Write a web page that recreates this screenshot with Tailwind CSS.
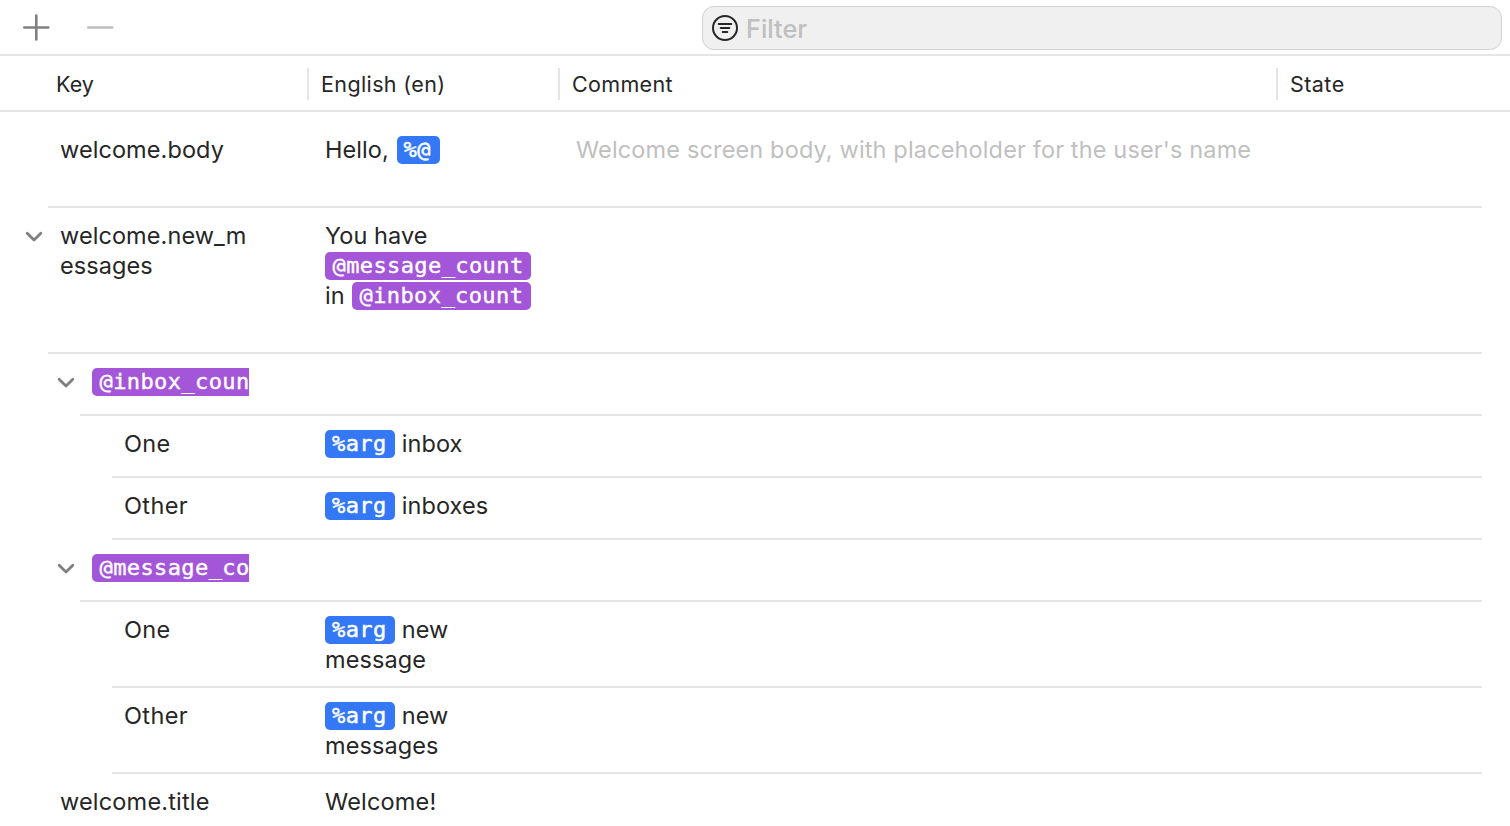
<!DOCTYPE html>
<html lang="en"><head><meta charset="utf-8"><title>String Catalog</title>
<script src="https://cdn.jsdelivr.net/npm/@tailwindcss/browser@4"></script></head>
<body class="w-[1510px] h-[826px] overflow-hidden bg-white font-['Inter',sans-serif] text-[#262626] text-[23.5px] leading-[30px] tracking-[0.08px]">
<header class="flex h-14 items-center border-b-2 border-[#e5e5e5] pl-[22px] pr-2">
  <button aria-label="Add"><svg class="block size-7" viewBox="0 0 28 28" fill="none" stroke="#7f7f7f" stroke-width="2.6" stroke-linecap="round"><path d="M14.3 2.5v24M2.3 14.5h24"/></svg></button>
  <button aria-label="Remove" class="ml-9"><svg class="block size-7" viewBox="0 0 28 28" fill="none" stroke="#bfbfbf" stroke-width="2.6" stroke-linecap="round"><path d="M2.3 14.5h24"/></svg></button>
  <div class="ml-auto mt-0.5 flex h-11 w-[800px] items-center rounded-xl border border-[#d2d2d2] bg-[#f0f0f0] pl-[9px] text-[#bfbfbf]">
    <svg class="block size-7 -mt-px" viewBox="0 0 28 28" fill="none" stroke="#262626" stroke-width="2"><circle cx="13" cy="14" r="12"/><path stroke-linecap="round" d="M6.7 10h12.6M8.7 14h8.6M10.7 18h4.6"/></svg>
    <span class="ml-[6px] pt-0.5 text-[25.3px] font-medium tracking-normal">Filter</span>
  </div>
</header>
<div class="flex h-14 items-center border-b-2 border-[#e5e5e5] pt-0.5 text-[21.5px]">
  <div class="w-[307px] pl-14">Key</div>
  <div class="flex h-8 w-[251px] items-center border-l-2 border-[#e5e5e5] pl-3 tracking-[0.38px]">English (en)</div>
  <div class="flex h-8 w-[718px] items-center border-l-2 border-[#e5e5e5] pl-3 tracking-[0.33px]">Comment</div>
  <div class="flex h-8 items-center border-l-2 border-[#e5e5e5] pl-3 tracking-[0.45px]">State</div>
</div>
<main>
  <div class="ml-12 mr-7 flex h-24 border-b-2 border-[#e5e5e5] pt-[23px]">
    <div class="w-[277px] pl-3">welcome.body</div>
    <div class="w-[251px]"><span class="mr-px">Hello,</span> <span class="inline-block h-7 rounded-[5px] bg-[#3478f6] pl-[7px] pr-[9px] align-[1px] font-['DejaVu_Sans_Mono',monospace] text-[22px] leading-7 tracking-[0.5px] text-white [-webkit-text-stroke:0.5px_white]">%@</span></div>
    <div class="text-[#bfbfbf] tracking-[0.145px]">Welcome screen body, with placeholder for the user's name</div>
  </div>

  <div class="ml-12 mr-7 flex h-[146px] border-b-2 border-[#e5e5e5] pt-[13px]">
    <svg class="-ml-6 mt-2 block h-4 w-5" viewBox="0 0 20 16" fill="none" stroke="#7f7f7f" stroke-width="2.8" stroke-linecap="round" stroke-linejoin="round"><path d="M3.2 4.3 10 11l6.8-6.7"/></svg>
    <div class="ml-4 w-[265px]">welcome.new_m<br>essages</div>
    <div class="w-[251px]">You have<br><span class="inline-block h-7 rounded-[5px] bg-[#a456d9] px-[7.5px] align-[1px] font-['DejaVu_Sans_Mono',monospace] text-[22px] leading-7 tracking-[0.4px] text-white [-webkit-text-stroke:0.4px_white]">@message_count</span><br>in <span class="ml-[0.6px] inline-block h-7 rounded-[5px] bg-[#a456d9] px-[7.5px] align-[1px] font-['DejaVu_Sans_Mono',monospace] text-[22px] leading-7 tracking-[0.4px] text-white [-webkit-text-stroke:0.4px_white]">@inbox_count</span></div>
  </div>

  <div class="ml-20 mr-7 flex h-[62px] border-b-2 border-[#e5e5e5] pt-[13px]">
    <svg class="-ml-6 mt-2 block h-4 w-5" viewBox="0 0 20 16" fill="none" stroke="#7f7f7f" stroke-width="2.8" stroke-linecap="round" stroke-linejoin="round"><path d="M3.2 4.3 10 11l6.8-6.7"/></svg>
    <div class="ml-4 mt-px h-7 w-[157px] overflow-hidden whitespace-nowrap rounded-l-[5px] bg-[#a456d9] pl-[7.5px] font-['DejaVu_Sans_Mono',monospace] text-[22px] leading-7 tracking-[0.4px] text-white [-webkit-text-stroke:0.4px_white]">@inbox_coun</div>
  </div>
  <div class="ml-28 mr-7 flex h-[62px] border-b-2 border-[#e5e5e5] pt-[13px]">
    <div class="w-[213px] pl-3 tracking-[0.3px]">One</div>
    <div><span class="inline-block h-7 rounded-[5px] bg-[#3478f6] pl-[7px] pr-[8.4px] align-[1px] font-['DejaVu_Sans_Mono',monospace] text-[22px] leading-7 tracking-[0.4px] text-white [-webkit-text-stroke:0.5px_white]">%arg</span> inbox</div>
  </div>
  <div class="ml-28 mr-7 flex h-[62px] border-b-2 border-[#e5e5e5] pt-[13px]">
    <div class="w-[213px] pl-3 tracking-[0.4px]">Other</div>
    <div><span class="inline-block h-7 rounded-[5px] bg-[#3478f6] pl-[7px] pr-[8.4px] align-[1px] font-['DejaVu_Sans_Mono',monospace] text-[22px] leading-7 tracking-[0.4px] text-white [-webkit-text-stroke:0.5px_white]">%arg</span> inboxes</div>
  </div>

  <div class="ml-20 mr-7 flex h-[62px] border-b-2 border-[#e5e5e5] pt-[13px]">
    <svg class="-ml-6 mt-2 block h-4 w-5" viewBox="0 0 20 16" fill="none" stroke="#7f7f7f" stroke-width="2.8" stroke-linecap="round" stroke-linejoin="round"><path d="M3.2 4.3 10 11l6.8-6.7"/></svg>
    <div class="ml-4 mt-px h-7 w-[157px] overflow-hidden whitespace-nowrap rounded-l-[5px] bg-[#a456d9] pl-[7.5px] font-['DejaVu_Sans_Mono',monospace] text-[22px] leading-7 tracking-[0.4px] text-white [-webkit-text-stroke:0.4px_white]">@message_co</div>
  </div>
  <div class="ml-28 mr-7 flex h-[86px] border-b-2 border-[#e5e5e5] pt-[13px]">
    <div class="w-[213px] pl-3 tracking-[0.3px]">One</div>
    <div><span class="inline-block h-7 rounded-[5px] bg-[#3478f6] pl-[7px] pr-[8.4px] align-[1px] font-['DejaVu_Sans_Mono',monospace] text-[22px] leading-7 tracking-[0.4px] text-white [-webkit-text-stroke:0.5px_white]">%arg</span> new<br>message</div>
  </div>
  <div class="ml-28 mr-7 flex h-[86px] border-b-2 border-[#e5e5e5] pt-[13px]">
    <div class="w-[213px] pl-3 tracking-[0.4px]">Other</div>
    <div><span class="inline-block h-7 rounded-[5px] bg-[#3478f6] pl-[7px] pr-[8.4px] align-[1px] font-['DejaVu_Sans_Mono',monospace] text-[22px] leading-7 tracking-[0.4px] text-white [-webkit-text-stroke:0.5px_white]">%arg</span> new<br>messages</div>
  </div>

  <div class="ml-12 mr-7 flex pt-[13px]">
    <div class="w-[277px] pl-3 tracking-[0.18px]">welcome.title</div>
    <div class="tracking-[0.18px]">Welcome!</div>
  </div>
</main>
</body></html>
